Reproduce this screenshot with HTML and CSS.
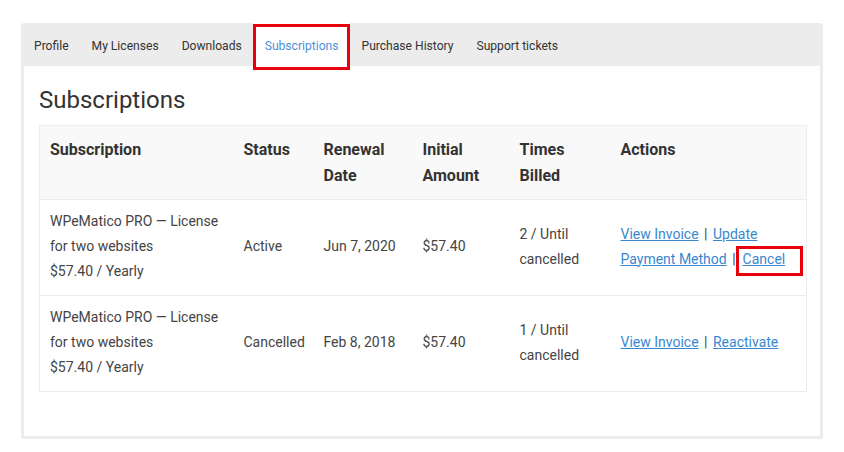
FILE: index.html
```html
<!DOCTYPE html>
<html>
<head>
<meta charset="utf-8">
<link rel="stylesheet" href="styles.css">
</head>
<body>
<div class="page">
  <div class="card">
    <nav class="tabs">
      <span class="tab">Profile</span>
      <span class="tab">My Licenses</span>
      <span class="tab">Downloads</span>
      <span class="tab active">Subscriptions</span>
      <span class="tab">Purchase History</span>
      <span class="tab">Support tickets</span>
    </nav>
    <div class="content">
      <h1 class="title">Subscriptions</h1>
      <table class="subs">
        <colgroup>
          <col class="c1"><col class="c2"><col class="c3"><col class="c4"><col class="c5"><col class="c6">
        </colgroup>
        <thead>
          <tr>
            <th>Subscription</th>
            <th>Status</th>
            <th>Renewal<br>Date</th>
            <th>Initial<br>Amount</th>
            <th>Times<br>Billed</th>
            <th>Actions</th>
          </tr>
        </thead>
        <tbody>
          <tr>
            <td>WPeMatico PRO — License for two websites<br>$57.40 / Yearly</td>
            <td>Active</td>
            <td>Jun 7, 2020</td>
            <td>$57.40</td>
            <td>2 / Until cancelled</td>
            <td><a href="#">View Invoice</a> <span class="sep">|</span> <a href="#">Update Payment Method</a> <span class="sep">|</span><span class="mark"><a href="#">Cancel</a></span></td>
          </tr>
          <tr>
            <td>WPeMatico PRO — License for two websites<br>$57.40 / Yearly</td>
            <td>Cancelled</td>
            <td>Feb 8, 2018</td>
            <td>$57.40</td>
            <td>1 / Until cancelled</td>
            <td><a href="#">View Invoice</a> <span class="sep">|</span> <a href="#">Reactivate</a></td>
          </tr>
        </tbody>
      </table>
    </div>
  </div>
</div>
</body>
</html>
```
FILE: styles.css
```css
html, body {
  margin: 0;
  padding: 0;
  background: #fff;
}
body {
  font-family: Roboto, "Liberation Sans", sans-serif;
  color: #444;
}
.page {
  padding: 23px 21px 0 21px;
  width: 802px;
}
.card {
  background: #ececec;
  border-radius: 3px;
  padding: 0 3px 3px 3px;
  width: 796px;
}
.tabs {
  display: flex;
  height: 43px;
  margin-left: -1.5px;
}
.tab {
  position: relative;
  display: flex;
  align-items: center;
  padding: 2px 11.5px 0 11.5px;
  font-size: 12.1px;
  color: #333;
}
.tab.active {
  background: #fff;
  color: #4a90d9;
}
.tab.active::after {
  content: "";
  position: absolute;
  left: 0;
  right: 0;
  top: 1px;
  bottom: -4px;
  border: 3px solid #e8000b;
}
.content {
  background: #fff;
  padding: 18px 14px 44px 15px;
}
.title {
  margin: 0 0 9px 0;
  font-size: 24px;
  font-weight: 400;
  line-height: 32px;
  color: #333;
}
.subs {
  border-collapse: collapse;
  table-layout: fixed;
  width: 767px;
  border: 1px solid #ececec;
}
.c1 { width: 194px; }
.c2 { width: 80px; }
.c3 { width: 99px; }
.c4 { width: 97px; }
.c5 { width: 101px; }
.c6 { width: 196px; }
.subs th {
  background: #f9f9f9;
  text-align: left;
  vertical-align: top;
  font-size: 16px;
  font-weight: 700;
  line-height: 26px;
  color: #333;
  padding: 11px 10px 10px 10px;
}
.subs td {
  font-size: 14px;
  line-height: 25px;
  vertical-align: middle;
  padding: 9px 10px 11px 10px;
  border-top: 1px solid #ececec;
}
.subs a {
  color: #3a87d0;
  text-decoration: underline;
}
.sep {
  margin: 0 2px;
}
.mark {
  position: relative;
  display: inline-block;
  margin-left: 5px;
}
.mark::after {
  content: "";
  position: absolute;
  left: -7px;
  right: -18px;
  top: -1px;
  bottom: -4px;
  border: 3px solid #e8000b;
}
```
